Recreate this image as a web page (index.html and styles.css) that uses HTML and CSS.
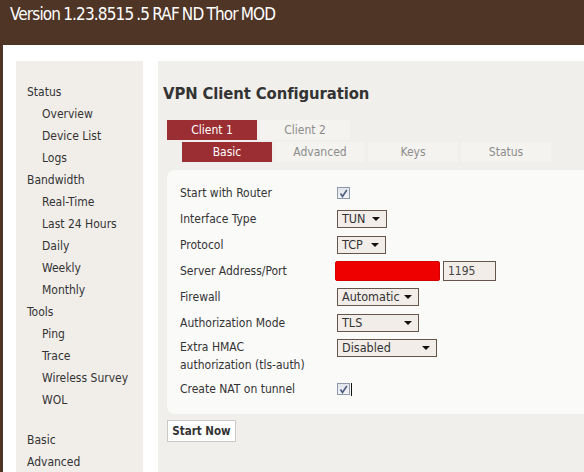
FILE: index.html
```html
<!DOCTYPE html>
<html>
<head>
<meta charset="utf-8">
<title>VPN Client Configuration</title>
<link rel="stylesheet" href="styles.css">
</head>
<body>
<header class="top"><h1 class="version">Version 1.23.8515 .5 RAF ND Thor MOD</h1></header>
<div class="wrap">
  <nav class="side">
    <span class="nav-top">Status</span>
    <span class="nav-sub">Overview</span>
    <span class="nav-sub">Device List</span>
    <span class="nav-sub">Logs</span>
    <span class="nav-top">Bandwidth</span>
    <span class="nav-sub">Real-Time</span>
    <span class="nav-sub">Last 24 Hours</span>
    <span class="nav-sub">Daily</span>
    <span class="nav-sub">Weekly</span>
    <span class="nav-sub">Monthly</span>
    <span class="nav-top">Tools</span>
    <span class="nav-sub">Ping</span>
    <span class="nav-sub">Trace</span>
    <span class="nav-sub">Wireless Survey</span>
    <span class="nav-sub">WOL</span>
    <span class="nav-top nav-gap">Basic</span>
    <span class="nav-top">Advanced</span>
  </nav>
  <main class="main">
    <h2 class="title">VPN Client Configuration</h2>
    <div class="tabs tabs-client">
      <span class="tab active">Client 1</span>
      <span class="tab">Client 2</span>
    </div>
    <div class="tabs tabs-sub">
      <span class="tab active">Basic</span>
      <span class="tab">Advanced</span>
      <span class="tab">Keys</span>
      <span class="tab">Status</span>
    </div>
    <div class="box">
      <div class="row">
        <div class="label">Start with Router</div>
        <div class="ctl"><span class="chk"><svg width="9" height="9" viewBox="0 0 9 9"><path d="M1.5 4.5 L3.5 7.5 L7.8 1" fill="none" stroke="#4f5f82" stroke-width="1.6"/></svg></span></div>
      </div>
      <div class="row">
        <div class="label">Interface Type</div>
        <div class="ctl"><span class="sel w-tun"><span>TUN</span><i class="arr"></i></span></div>
      </div>
      <div class="row">
        <div class="label">Protocol</div>
        <div class="ctl"><span class="sel w-tcp"><span>TCP</span><i class="arr"></i></span></div>
      </div>
      <div class="row">
        <div class="label">Server Address/Port</div>
        <div class="ctl"><span class="redact"></span><span class="port">1195</span></div>
      </div>
      <div class="row">
        <div class="label">Firewall</div>
        <div class="ctl"><span class="sel w-auto"><span>Automatic</span><i class="arr"></i></span></div>
      </div>
      <div class="row">
        <div class="label">Authorization Mode</div>
        <div class="ctl"><span class="sel w-auto"><span>TLS</span><i class="arr"></i></span></div>
      </div>
      <div class="row row-tall">
        <div class="label label-tall">Extra HMAC<br>authorization (tls-auth)</div>
        <div class="ctl ctl-top"><span class="sel w-dis"><span>Disabled</span><i class="arr"></i></span></div>
      </div>
      <div class="row">
        <div class="label">Create NAT on tunnel</div>
        <div class="ctl"><span class="chk"><svg width="9" height="9" viewBox="0 0 9 9"><path d="M1.5 4.5 L3.5 7.5 L7.8 1" fill="none" stroke="#4f5f82" stroke-width="1.6"/></svg></span><span class="caret"></span></div>
      </div>
    </div>
    <button class="btn">Start Now</button>
  </main>
</div>
</body>
</html>
```
FILE: styles.css
```css
html, body {
  margin: 0;
  padding: 0;
}
body {
  background: #4f3526;
  font-family: "DejaVu Sans Condensed", "DejaVu Sans", sans-serif;
  font-size: 12px;
  color: #333;
  height: 472px;
  overflow: hidden;
}
.top {
  height: 45px;
  padding-left: 10px;
}
.version {
  margin: 0;
  font-size: 17px;
  font-weight: normal;
  line-height: 28px;
  color: #fff;
  letter-spacing: -0.85px;
  word-spacing: -1px;
}
.wrap {
  display: flex;
  gap: 15px;
  margin-left: 3px;
  padding: 16px 0 0 13px;
  background: #fff;
  height: 427px;
  box-sizing: border-box;
}
.side {
  width: 127px;
  flex: none;
  box-sizing: border-box;
  background: #f1eeea;
  padding: 20px 0 0 11px;
  display: flex;
  flex-direction: column;
}
.nav-top, .nav-sub {
  line-height: 22px;
  color: #333;
}
.nav-sub {
  padding-left: 15px;
}
.nav-gap {
  margin-top: 18px;
}
.main {
  flex: 1;
  background: #f1efeb;
  padding: 23px 0 0 5px;
  min-width: 0;
}
.title {
  margin: 0;
  font-size: 16.5px;
  line-height: 20px;
  font-weight: bold;
  color: #333;
  letter-spacing: -0.1px;
}
.tabs {
  display: flex;
  gap: 3px;
}
.tabs-client {
  margin: 16px 0 0 4px;
}
.tabs-sub {
  margin: 2px 0 0 19px;
}
.tab {
  width: 90px;
  height: 20px;
  line-height: 20px;
  text-align: center;
  background: #f5f3f0;
  color: #8c8c8c;
}
.tab.active {
  background: #9a2e33;
  color: #fff;
}
.box {
  margin: 8px 0 0 4px;
  background: #fafaf9;
  border-radius: 8px 0 0 8px;
  padding: 11px 0 12px 13px;
}
.row {
  display: flex;
  align-items: center;
  padding: 3px 0;
  line-height: 20px;
}
.row:first-child {
  padding-top: 2px;
}
.row-tall {
  align-items: flex-start;
  padding: 2px 0 2px;
}
.label {
  width: 157px;
  flex: none;
  color: #333;
}
.label-tall {
  line-height: 18px;
}
.ctl {
  display: flex;
  align-items: center;
  height: 20px;
}
.ctl-top {
  padding-top: 1px;
  height: 18px;
}
.chk {
  width: 13px;
  height: 12px;
  box-sizing: border-box;
  border: 1px solid #8e99ad;
  background: linear-gradient(#e2e5ec, #f3f4f7);
  display: flex;
  align-items: center;
  justify-content: center;
}
.caret {
  width: 1px;
  height: 13px;
  background: #111;
  margin-left: 1px;
}
.sel {
  height: 18px;
  box-sizing: border-box;
  border: 1px solid #65554a;
  background: #f2ede9;
  display: flex;
  align-items: center;
  justify-content: space-between;
  padding: 0 6px 0 4px;
  color: #333;
  font-size: 12.5px;
  line-height: 16px;
}
.w-tun { width: 50px; }
.w-tcp { width: 49px; }
.w-auto { width: 82px; }
.w-dis { width: 100px; }
.arr {
  width: 0;
  height: 0;
  border-left: 4px solid transparent;
  border-right: 4px solid transparent;
  border-top: 4px solid #111;
}
.redact {
  width: 105px;
  height: 20px;
  margin-left: -2px;
  box-sizing: border-box;
  background: #ee0000;
  border: 1px solid #d40000;
  border-radius: 2px;
}
.port {
  width: 53px;
  height: 20px;
  margin-left: 3px;
  box-sizing: border-box;
  border: 1px solid #65554a;
  background: #f2ede9;
  padding-left: 4px;
  line-height: 18px;
  color: #444;
}
.btn {
  display: block;
  margin: 6px 0 0 4px;
  width: 69px;
  height: 22px;
  padding: 0;
  border: 1px solid #c9c9c9;
  background: #fff;
  font-family: "DejaVu Sans Condensed", "DejaVu Sans", sans-serif;
  font-size: 11.5px;
  font-weight: bold;
  color: #333;
}
```
